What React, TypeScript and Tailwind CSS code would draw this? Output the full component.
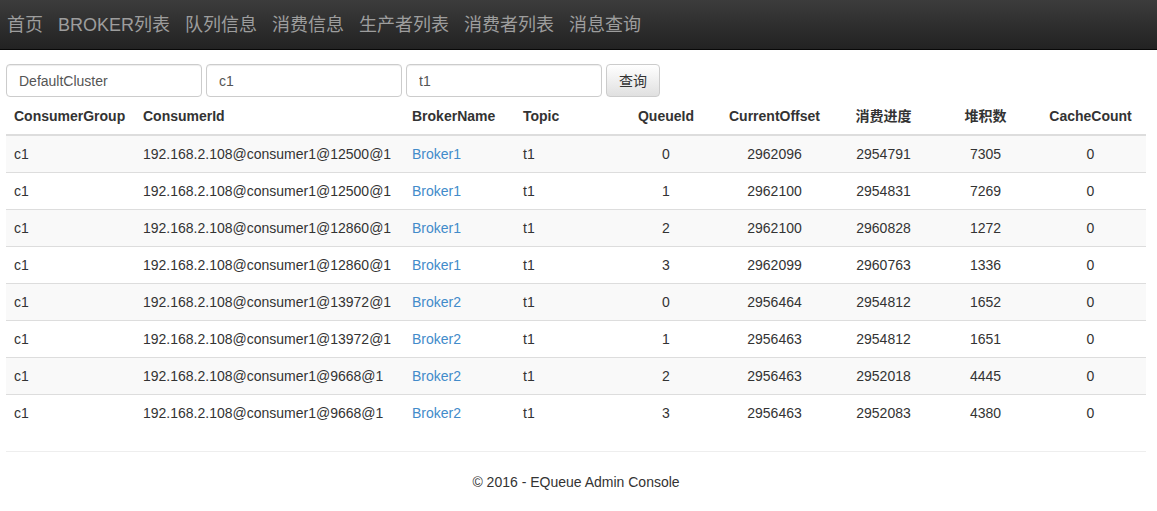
import React from 'react';

const NAV = ['首页', 'BROKER列表', '队列信息', '消费信息', '生产者列表', '消费者列表', '消息查询'];

const COLS: { label: string; w: string; center?: boolean }[] = [
  { label: 'ConsumerGroup', w: 'w-[129px]' },
  { label: 'ConsumerId', w: 'w-[269px]' },
  { label: 'BrokerName', w: 'w-[111px]' },
  { label: 'Topic', w: 'w-[99px]' },
  { label: 'QueueId', w: 'w-[104px]', center: true },
  { label: 'CurrentOffset', w: 'w-[113px]', center: true },
  { label: '消费进度', w: 'w-[105px]', center: true },
  { label: '堆积数', w: 'w-[99px]', center: true },
  { label: 'CacheCount', w: 'w-[111px]', center: true },
];

const ROWS = [
  ['c1', '192.168.2.108@consumer1@12500@1', 'Broker1', 't1', '0', '2962096', '2954791', '7305', '0'],
  ['c1', '192.168.2.108@consumer1@12500@1', 'Broker1', 't1', '1', '2962100', '2954831', '7269', '0'],
  ['c1', '192.168.2.108@consumer1@12860@1', 'Broker1', 't1', '2', '2962100', '2960828', '1272', '0'],
  ['c1', '192.168.2.108@consumer1@12860@1', 'Broker1', 't1', '3', '2962099', '2960763', '1336', '0'],
  ['c1', '192.168.2.108@consumer1@13972@1', 'Broker2', 't1', '0', '2956464', '2954812', '1652', '0'],
  ['c1', '192.168.2.108@consumer1@13972@1', 'Broker2', 't1', '1', '2956463', '2954812', '1651', '0'],
  ['c1', '192.168.2.108@consumer1@9668@1', 'Broker2', 't1', '2', '2956463', '2952018', '4445', '0'],
  ['c1', '192.168.2.108@consumer1@9668@1', 'Broker2', 't1', '3', '2956463', '2952083', '4380', '0'],
];

const FONT = "font-['Liberation_Sans','Noto_Sans_CJK_SC',sans-serif]";

export default function App() {
  return (
    <div className={`${FONT} text-[14px] leading-[20px] text-[#333] bg-white min-h-[511px]`}>
      <div className="h-[50px] bg-gradient-to-b from-[#3c3c3c] to-[#222] border-b border-[#080808] flex items-center gap-[15px] px-[7px]">
        {NAV.map((n) => (
          <span key={n} className="text-[18px] leading-[20px] text-[#9d9d9d] pt-[1px]">
            {n}
          </span>
        ))}
      </div>

      <div className="px-[6px] pt-[14px]">
        <div className="flex items-center gap-[4px]">
          {['DefaultCluster', 'c1', 't1'].map((v) => (
            <input
              key={v}
              defaultValue={v}
              className="w-[196px] h-[33px] px-[12px] border border-[#ccc] rounded-[4px] text-[14px] text-[#555] shadow-[inset_0_1px_1px_rgba(0,0,0,0.075)] outline-none"
            />
          ))}
          <button className="h-[33px] px-[12px] border border-[#ccc] rounded-[4px] bg-gradient-to-b from-white to-[#e0e0e0] text-[14px] text-[#333] shadow-[0_1px_0_rgba(255,255,255,0.15)]">
            查询
          </button>
        </div>

        <table className="w-[1140px] table-fixed border-collapse mt-[1px]">
          <thead>
            <tr>
              {COLS.map((c) => (
                <th
                  key={c.label}
                  className={`${c.w} px-[8px] py-[8px] font-bold border-b-2 border-[#ddd] ${c.center ? 'text-center' : 'text-left'}`}
                >
                  {c.label}
                </th>
              ))}
            </tr>
          </thead>
          <tbody>
            {ROWS.map((r, i) => (
              <tr key={i} className={i % 2 === 0 ? 'bg-[#f9f9f9]' : 'bg-white'}>
                {r.map((cell, j) => (
                  <td
                    key={j}
                    className={`px-[8px] py-[8px] border-t border-[#ddd] whitespace-nowrap overflow-hidden ${
                      COLS[j].center ? 'text-center' : 'text-left'
                    } ${j === 2 ? 'text-[#428bca]' : ''}`}
                  >
                    {cell}
                  </td>
                ))}
              </tr>
            ))}
          </tbody>
        </table>

        <hr className="mt-[20px] mb-[20px] border-0 border-t border-[#eee] w-[1140px]" />
        <p className="text-center w-[1140px]">© 2016 - EQueue Admin Console</p>
      </div>
    </div>
  );
}
